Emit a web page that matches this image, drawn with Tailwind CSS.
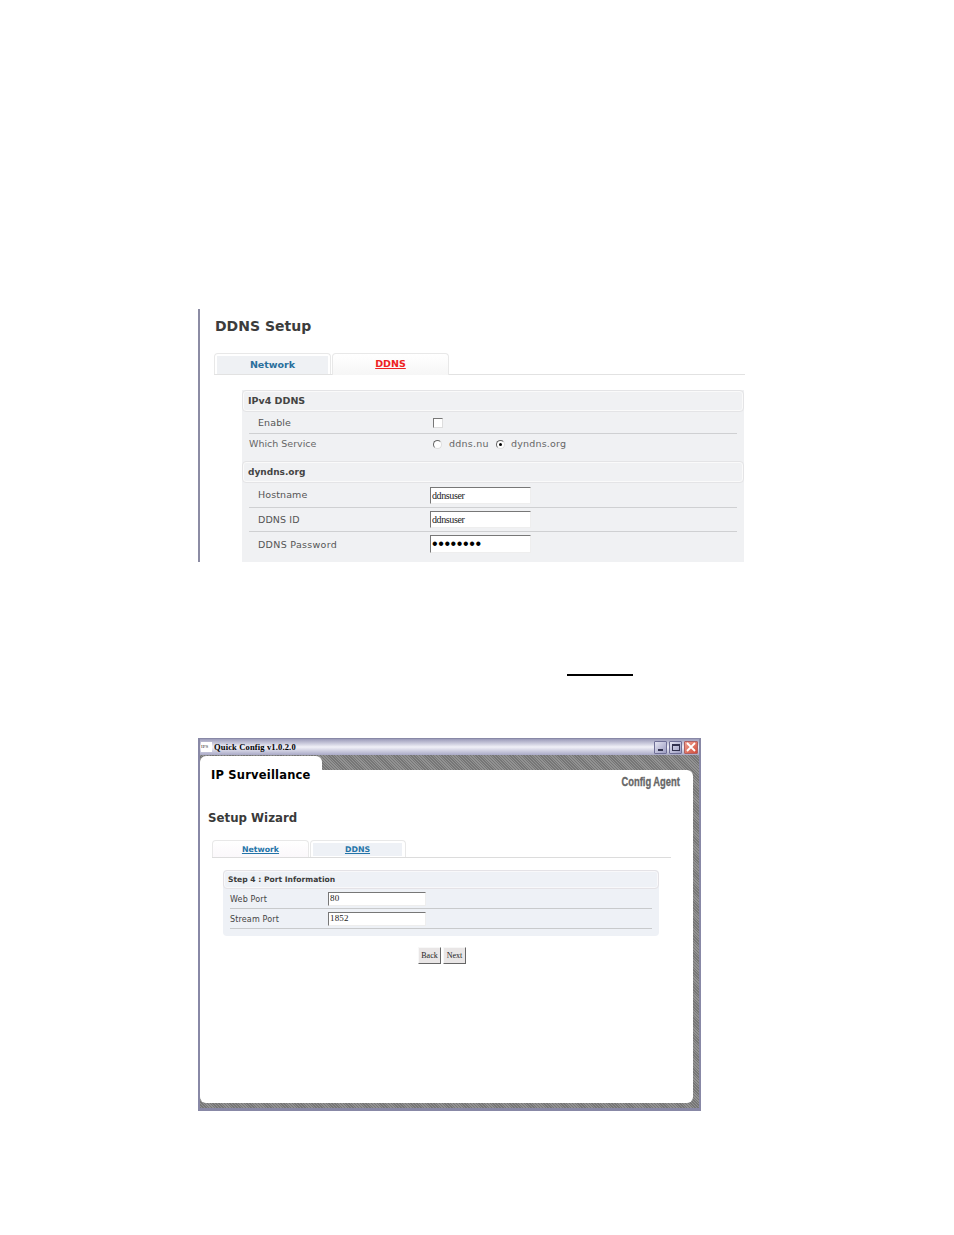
<!DOCTYPE html>
<html lang="en">
<head>
  <meta charset="UTF-8">
  <title>DDNS Setup</title>
  <script src="https://cdn.jsdelivr.net/npm/@tailwindcss/browser@4"></script>
</head>
<body class="bg-white h-[1235px] overflow-hidden pt-[309px] pl-[198px] font-['DejaVu_Sans',sans-serif]">

  <!-- DDNS setup figure -->
  <div class="w-[547px] h-[253px] border-l-2 border-[#8c8ca4]">
    <h1 class="pl-[15px] pt-[8px] h-[44px] text-[14px] leading-[18px] font-bold text-[#3c3c3c]">DDNS Setup</h1>

    <div class="flex items-start h-[22px] ml-[14px] border-b border-[#e2e2e2]">
      <div class="w-[117px] h-[21px] border border-b-0 border-[#e8e8e8] rounded-t p-[2px] pb-0">
        <div class="h-full bg-[#eff1f4] text-center text-[9.5px] leading-[17px] font-bold text-[#2a6f9c]">Network</div>
      </div>
      <div class="w-[117px] h-[22px] ml-[1px] border border-b-0 border-[#e8e8e8] rounded-t bg-gradient-to-b from-white to-[#f6f6f6] text-center text-[9.5px] leading-[20px] font-bold text-[#ee2222] underline">DDNS</div>
    </div>

    <div class="ml-[42px] mt-[15px] w-[502px] bg-[#f0f1f3] text-[9.5px] text-[#555]">
      <div class="h-[22px] bg-[#f0f1f3] border border-[#e4e4e6] shadow-[inset_0_0_0_1px_#fafafa] rounded pl-[5px] leading-[20px] font-bold text-[#444]">IPv4 DDNS</div>
      <div class="flex items-center h-[22px] pt-[1px] mx-[7px] border-b border-[#cfd0d2]">
        <span class="w-[181px] pl-[9px] tracking-[.1px]">Enable</span>
        <span class="w-[10px] h-[10px] ml-[3px] bg-white border border-t-[#777] border-l-[#777] border-r-[#ddd] border-b-[#ddd]"></span>
      </div>
      <div class="flex items-center h-[27px] pb-[6px] mx-[7px] text-[#666]">
        <span class="w-[184px]">Which Service</span>
        <span class="w-[9px] h-[9px] mr-[7px] rounded-full bg-white border border-t-[#666] border-l-[#666] border-r-[#ddd] border-b-[#ddd]"></span>
        <span class="w-[47px] tracking-[.25px]">ddns.nu</span>
        <span class="flex items-center justify-center w-[9px] h-[9px] mr-[6px] rounded-full bg-white border border-t-[#666] border-l-[#666] border-r-[#ddd] border-b-[#ddd]"><span class="w-[3px] h-[3px] rounded-full bg-black"></span></span>
        <span class="tracking-[.2px]">dyndns.org</span>
      </div>
      <div class="h-[22px] bg-[#f0f1f3] border border-[#e4e4e6] shadow-[inset_0_0_0_1px_#fafafa] rounded pl-[5px] leading-[20px] text-[9px] font-bold text-[#444]">dyndns.org</div>
      <div class="flex items-center h-[25px] mx-[7px] border-b border-[#cfd0d2]">
        <span class="w-[181px] pl-[9px] mt-[1px] tracking-[.1px]">Hostname</span>
        <input value="ddnsuser" class="w-[101px] h-[17px] pl-[1px] bg-white border border-t-[#777] border-l-[#777] border-r-[#eee] border-b-[#eee] font-['Liberation_Serif',serif] text-[10px] tracking-[-0.4px] text-[#222]">
      </div>
      <div class="flex items-center h-[24px] mx-[7px] border-b border-[#cfd0d2]">
        <span class="w-[181px] pl-[9px] mt-[1px] tracking-[.1px]">DDNS ID</span>
        <input value="ddnsuser" class="w-[101px] h-[17px] pl-[1px] bg-white border border-t-[#777] border-l-[#777] border-r-[#eee] border-b-[#eee] font-['Liberation_Serif',serif] text-[10px] tracking-[-0.4px] text-[#222]">
      </div>
      <div class="flex items-center h-[30px] pb-[4px] mx-[7px]">
        <span class="w-[181px] pl-[9px] tracking-[.3px]">DDNS Password</span>
        <input type="password" value="12345678" class="w-[101px] h-[18px] mb-[2px] pl-[1px] bg-white border border-t-[#777] border-l-[#777] border-r-[#eee] border-b-[#eee] font-['Liberation_Sans',sans-serif] text-[16px] tracking-[.6px] text-black">
      </div>
    </div>
  </div>

  <!-- underlined blank in the page text -->
  <div class="ml-[369px] mt-[112px] w-[66px] h-[2px] bg-black"></div>

  <!-- Quick Config window -->
  <div class="mt-[62px] w-[503px] h-[373px] flex flex-col border-2 border-t border-[#8888a6] border-b-[3px] bg-[repeating-linear-gradient(45deg,#767676_0,#767676_1px,#929292_1px,#929292_2px)]">
    <div class="flex items-center h-[16px] shrink-0 bg-gradient-to-b from-[#9c9cba] via-[#f1f1f8] to-[#a9a9c6]">
      <span class="w-[11px] ml-[1px] h-[10px] bg-white font-['Liberation_Serif',serif] text-[5px] leading-[10px] text-[#333]">IPS</span>
      <span class="ml-[2px] font-['Liberation_Serif',serif] text-[8.5px] font-bold tracking-[0.15px] text-black">Quick Config v1.0.2.0</span>
      <div class="ml-auto flex gap-[2px] pr-[1px]">
        <span class="flex items-end justify-center w-[13px] h-[13px] pb-[2px] rounded-[1px] border border-[#6f6f96] bg-gradient-to-br from-[#e4e4f2] to-[#9c9cc0]"><span class="w-[5px] h-[2px] bg-[#33334f]"></span></span>
        <span class="flex items-center justify-center w-[13px] h-[13px] rounded-[1px] border border-[#6f6f96] bg-gradient-to-br from-[#e4e4f2] to-[#9c9cc0]"><span class="w-[8px] h-[7px] border border-t-2 border-[#33334f]"></span></span>
        <span class="flex items-center justify-center w-[14px] h-[13px] rounded-[1px] border border-[#b06060] bg-gradient-to-br from-[#f0a090] to-[#d04a3a]">
          <svg width="10" height="10" viewBox="0 0 10 10"><path d="M1 1L9 9M9 1L1 9" stroke="#fff" stroke-width="1.8" fill="none"/></svg>
        </span>
      </div>
    </div>

    <div class="flex h-[15px] pt-[1px] shrink-0">
      <div class="w-[122px] bg-white rounded-t-md"></div>
    </div>

    <div class="w-[493px] h-[333px] bg-white rounded-b-md rounded-tr-md">
      <div class="flex justify-between h-[36px]">
        <span class="pl-[11px] -mt-[2px] text-[11.5px] leading-[14px] tracking-[.2px] font-bold text-black">IP Surveillance</span>
        <span class="mr-[13px] mt-[5px] origin-right scale-x-[.78] font-['Liberation_Sans',sans-serif] text-[12px] leading-[14px] font-bold text-[#666] [-webkit-text-stroke:0.3px_#666]">Config Agent</span>
      </div>
      <h2 class="pl-[8px] mt-[4px] text-[11.8px] leading-[16px] font-bold text-[#3a3a3a]">Setup Wizard</h2>

      <div class="flex items-end h-[18px] mt-[14px] ml-[12px] w-[459px] border-b border-[#dcdcdc]">
        <div class="w-[97px] h-[17px] border border-b-0 border-[#e8e8e8] rounded-t bg-gradient-to-b from-white to-[#fbf8fb] text-center text-[7.8px] leading-[18px] font-bold text-[#2474a8] underline">Network</div>
        <div class="w-[96px] h-[17px] ml-[1px] border border-b-0 border-[#e8e8e8] rounded-t p-[2px] pb-0">
          <div class="h-[13px] mr-[1px] bg-[#eef1f6] text-center text-[7.8px] leading-[14px] font-bold text-[#2474a8] underline">DDNS</div>
        </div>
      </div>

      <div class="ml-[23px] mt-[12px] w-[436px] h-[66px] bg-[#eef1f6] rounded text-[8px] tracking-[.15px] text-[#444]">
        <div class="h-[19px] bg-[#eef1f6] border border-[#e4e2e6] shadow-[inset_0_0_0_1px_#f8f8fa] rounded pl-[4px] leading-[17px] text-[7.6px] tracking-normal font-bold text-[#3c3c3c]">Step 4 : Port Information</div>
        <div class="flex items-center h-[20px] pt-[1px] mx-[7px] border-b border-[#c8cacc]">
          <span class="w-[98px] mt-[2px]">Web Port</span>
          <input value="80" class="w-[98px] h-[14px] -mt-[1px] pl-[1px] pb-[2px] bg-white border border-t-[#777] border-l-[#777] border-r-[#eee] border-b-[#eee] font-['Liberation_Serif',serif] text-[9px] text-[#222]">
        </div>
        <div class="flex items-center h-[20px] pt-[1px] mx-[7px] border-b border-[#c8cacc]">
          <span class="w-[98px] mt-[2px]">Stream Port</span>
          <input value="1852" class="w-[98px] h-[14px] -mt-[1px] pl-[1px] pb-[2px] bg-white border border-t-[#777] border-l-[#777] border-r-[#eee] border-b-[#eee] font-['Liberation_Serif',serif] text-[9px] text-[#222]">
        </div>
      </div>

      <div class="flex justify-center gap-[2px] mt-[11px] pr-[9px]">
        <button class="w-[23px] h-[17px] bg-[#e9e6e6] border border-t-[#f8f8f8] border-l-[#f8f8f8] border-r-[#666] border-b-[#666] font-['Liberation_Serif',serif] text-[8px] text-[#222]">Back</button>
        <button class="w-[23px] h-[17px] bg-[#e9e6e6] border border-t-[#f8f8f8] border-l-[#f8f8f8] border-r-[#666] border-b-[#666] font-['Liberation_Serif',serif] text-[8px] text-[#222]">Next</button>
      </div>
    </div>
  </div>
</body>
</html>
